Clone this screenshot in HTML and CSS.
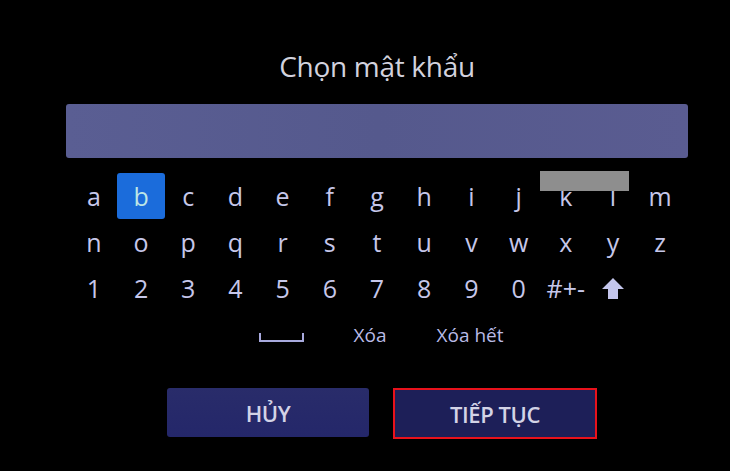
FILE: index.html
```html
<!DOCTYPE html>
<html lang="vi">
<head>
<meta charset="utf-8">
<title>Chọn mật khẩu</title>
<link rel="stylesheet" href="styles.css">
</head>
<body>
<div class="screen">
  <h1 class="title">Chọn mật khẩu</h1>
  <div class="input-bar"></div>
  <div class="keyboard">
    <span class="key">a</span><span class="key key-active">b</span><span class="key">c</span><span class="key">d</span><span class="key">e</span><span class="key">f</span><span class="key">g</span><span class="key">h</span><span class="key">i</span><span class="key">j</span><span class="key">k</span><span class="key">l</span><span class="key">m</span>
    <span class="key">n</span><span class="key">o</span><span class="key">p</span><span class="key">q</span><span class="key">r</span><span class="key">s</span><span class="key">t</span><span class="key">u</span><span class="key">v</span><span class="key">w</span><span class="key">x</span><span class="key">y</span><span class="key">z</span>
    <span class="key">1</span><span class="key">2</span><span class="key">3</span><span class="key">4</span><span class="key">5</span><span class="key">6</span><span class="key">7</span><span class="key">8</span><span class="key">9</span><span class="key">0</span><span class="key key-sym">#+-</span>
    <span class="key key-shift"><svg width="22" height="21" viewBox="0 0 22 21"><polygon points="11,0 22,11 16,11 16,21 6,21 6,11 0,11" fill="#c4c6ec"/></svg></span>
  </div>
  <div class="actions-row">
    <span class="space-glyph"></span>
    <span class="action">Xóa</span>
    <span class="action">Xóa hết</span>
  </div>
  <div class="buttons">
    <div class="btn">HỦY</div>
    <div class="btn btn-focus">TIẾP TỤC</div>
  </div>
</div>
<div class="redact"></div>
</body>
</html>
```
FILE: styles.css
```css
html, body {
  margin: 0;
  padding: 0;
  background: #000;
}
body {
  width: 730px;
  height: 471px;
  overflow: hidden;
  position: relative;
  font-family: "Open Sans", "Noto Sans", sans-serif;
}
.screen {
  box-sizing: border-box;
  width: 730px;
  padding: 49px 0 0 24px;
  display: flex;
  flex-direction: column;
  align-items: center;
}
.title {
  margin: 0;
  font-size: 28px;
  line-height: 34px;
  font-weight: 400;
  color: #d2d2de;
  letter-spacing: -0.3px;
}
.input-bar {
  margin-top: 21px;
  width: 622px;
  height: 54px;
  border-radius: 3px;
  background: linear-gradient(90deg, #5a5e93 0%, #55598d 50%, #5a5c91 100%);
}
.keyboard {
  margin-top: 15px;
  display: grid;
  grid-template-columns: repeat(13, 47.2px);
  grid-auto-rows: 46px;
}
.key {
  display: flex;
  justify-content: center;
  align-items: flex-start;
  font-size: 25px;
  line-height: 46px;
  color: #c6c7ea;
}
.key-active {
  background: #1b6cdb;
  border-radius: 3px;
  color: #bde6e6;
}
.key-sym {
  font-size: 25px;
  letter-spacing: 0;
}
.key-shift svg {
  margin-top: 13px;
}
.actions-row {
  margin-top: 9px;
  margin-left: 8px;
  display: flex;
  align-items: flex-start;
  gap: 50px;
  height: 30px;
}
.action {
  font-size: 19px;
  line-height: 30px;
  color: #b9bbe6;
}
.space-glyph {
  box-sizing: border-box;
  margin-top: 13px;
  width: 45px;
  height: 9px;
  border: 2px solid #a8aade;
  border-top: none;
}
.buttons {
  margin-top: 38px;
  margin-left: 10px;
  display: flex;
  gap: 24px;
  align-items: flex-start;
}
.btn {
  box-sizing: border-box;
  width: 202px;
  height: 49px;
  border-radius: 3px;
  background: linear-gradient(180deg, #292c6a 0%, #24276a 100%);
  color: #d3d3e6;
  font-size: 22px;
  font-weight: 600;
  letter-spacing: -0.4px;
  display: flex;
  align-items: center;
  justify-content: center;
}
.btn-focus {
  width: 204px;
  height: 51px;
  border-radius: 0;
  border: 2px solid #e8121c;
  background: #1d1f58;
}
.redact {
  position: absolute;
  left: 540px;
  top: 171px;
  width: 89px;
  height: 20px;
  background: #8e8e8e;
}
```
